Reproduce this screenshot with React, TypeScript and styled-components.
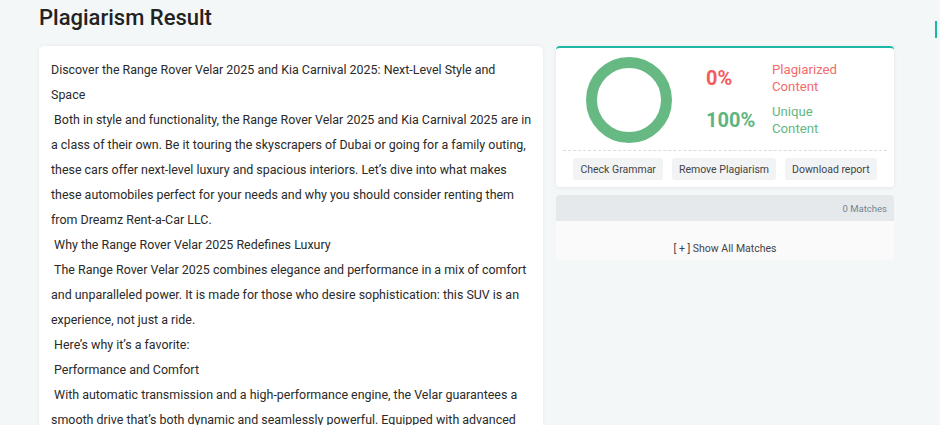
import React from 'react'
import styled, { createGlobalStyle } from 'styled-components'

const GlobalStyle = createGlobalStyle`
	body {
		margin: 0;
		background: #f4f7f8;
		font-family: Roboto, 'Liberation Sans', sans-serif;
		color: #333;
	}
`

const paragraphs = [
	'Discover the Range Rover Velar 2025 and Kia Carnival 2025: Next-Level Style and Space',
	' Both in style and functionality, the Range Rover Velar 2025 and Kia Carnival 2025 are in a class of their own. Be it touring the skyscrapers of Dubai or going for a family outing, these cars offer next-level luxury and spacious interiors. Let\u2019s dive into what makes these automobiles perfect for your needs and why you should consider renting them from Dreamz Rent-a-Car LLC.',
	' Why the Range Rover Velar 2025 Redefines Luxury',
	' The Range Rover Velar 2025 combines elegance and performance in a mix of comfort and unparalleled power. It is made for those who desire sophistication: this SUV is an experience, not just a ride.',
	' Here\u2019s why it\u2019s a favorite:',
	' Performance and Comfort',
	' With automatic transmission and a high-performance engine, the Velar guarantees a smooth drive that\u2019s both dynamic and seamlessly powerful. Equipped with advanced technology and premium features, it sets a new standard.',
]

export default function App() {
	return (
		<>
			<GlobalStyle />
			<Page>
				<Title>Plagiarism Result</Title>
				<Columns>
					<TextCard>
						{paragraphs.map((p, i) => (
							<Para key={i}>{p}</Para>
						))}
					</TextCard>
					<Side>
						<ResultCard>
							<Summary>
								<Donut />
								<Stats>
									<Stat>
										<Percent $color='#f25c5c'>0%</Percent>
										<Label $color='#f26b6b'>Plagiarized Content</Label>
									</Stat>
									<Stat>
										<Percent $color='#5fb580'>100%</Percent>
										<Label $color='#64b884'>Unique Content</Label>
									</Stat>
								</Stats>
							</Summary>
							<Actions>
								<ActionButton>Check Grammar</ActionButton>
								<ActionButton>Remove Plagiarism</ActionButton>
								<ActionButton>Download report</ActionButton>
							</Actions>
						</ResultCard>
						<MatchesCard>
							<MatchesHeader>0 Matches</MatchesHeader>
							<MatchesBody>[ + ] Show All Matches</MatchesBody>
						</MatchesCard>
					</Side>
				</Columns>
				<EdgeMark />
			</Page>
		</>
	)
}

function Donut() {
	return (
		<DonutWrap>
			<svg width='88' height='88' viewBox='0 0 88 88'>
				<circle cx='44' cy='44' r='37.5' fill='none' stroke='#67b983' strokeWidth='11' />
			</svg>
		</DonutWrap>
	)
}

const Page = styled.div`
	position: relative;
	padding: 0 46px 0 39px;
	height: 425px;
	overflow: hidden;
`

const Title = styled.h1`
	margin: 0;
	padding-top: 4px;
	height: 46px;
	box-sizing: border-box;
	font-size: 22px;
	font-weight: 500;
	color: #222;
	line-height: 28px;
`

const Columns = styled.div`
	display: grid;
	grid-template-columns: 504px 338px;
	gap: 13px;
	align-items: start;
`

const TextCard = styled.div`
	background: #fff;
	border-radius: 5px;
	box-shadow: 0 0 4px rgba(0, 0, 0, 0.06);
	padding: 11px 11px 20px 12px;
`

const Para = styled.p`
	margin: 0;
	font-size: 12.45px;
	line-height: 25px;
	color: #2a2a2a;
	white-space: pre-wrap;
`

const Side = styled.div`
	display: flex;
	flex-direction: column;
	gap: 8px;
`

const ResultCard = styled.div`
	background: #fff;
	border-top: 2px solid #1db7a6;
	border-radius: 4px;
	box-shadow: 0 1px 4px rgba(0, 0, 0, 0.07);
	padding: 0 7px 7px;
	height: 141px;
	box-sizing: border-box;
`

const Summary = styled.div`
	display: flex;
	align-items: center;
	height: 102px;
	border-bottom: 1px dashed #dcdcdc;
`

const DonutWrap = styled.div`
	width: 88px;
	height: 88px;
	margin-left: 22px;
	margin-top: 2px;
`

const Stats = styled.div`
	display: flex;
	flex-direction: column;
	gap: 8px;
	margin-left: 33px;
`

const Stat = styled.div`
	display: flex;
	align-items: center;
`

const Percent = styled.div<{ $color: string }>`
	width: 66px;
	font-size: 20px;
	font-weight: 700;
	color: ${(p) => p.$color};
`

const Label = styled.div<{ $color: string }>`
	width: 80px;
	font-size: 13.2px;
	line-height: 17px;
	color: ${(p) => p.$color};
`

const Actions = styled.div`
	display: flex;
	justify-content: center;
	gap: 9px;
	padding-top: 7px;
`

const ActionButton = styled.button`
	border: none;
	background: #f2f3f5;
	border-radius: 3px;
	height: 22px;
	padding: 0 7px;
	font-family: Roboto, 'Liberation Sans', sans-serif;
	font-size: 10.5px;
	color: #444;
`

const MatchesCard = styled.div`
	border-radius: 4px;
	overflow: hidden;
	background: #fafafa;
`

const MatchesHeader = styled.div`
	height: 26px;
	background: #e5e9ec;
	display: flex;
	align-items: center;
	justify-content: flex-end;
	padding-right: 7px;
	font-size: 9.5px;
	color: #738594;
`

const MatchesBody = styled.div`
	height: 39px;
	box-sizing: border-box;
	padding-top: 21px;
	text-align: center;
	font-size: 10.5px;
	color: #444;
`

const EdgeMark = styled.div`
	position: absolute;
	top: 21px;
	right: 3px;
	width: 2px;
	height: 17px;
	background: #1db7a6;
`
